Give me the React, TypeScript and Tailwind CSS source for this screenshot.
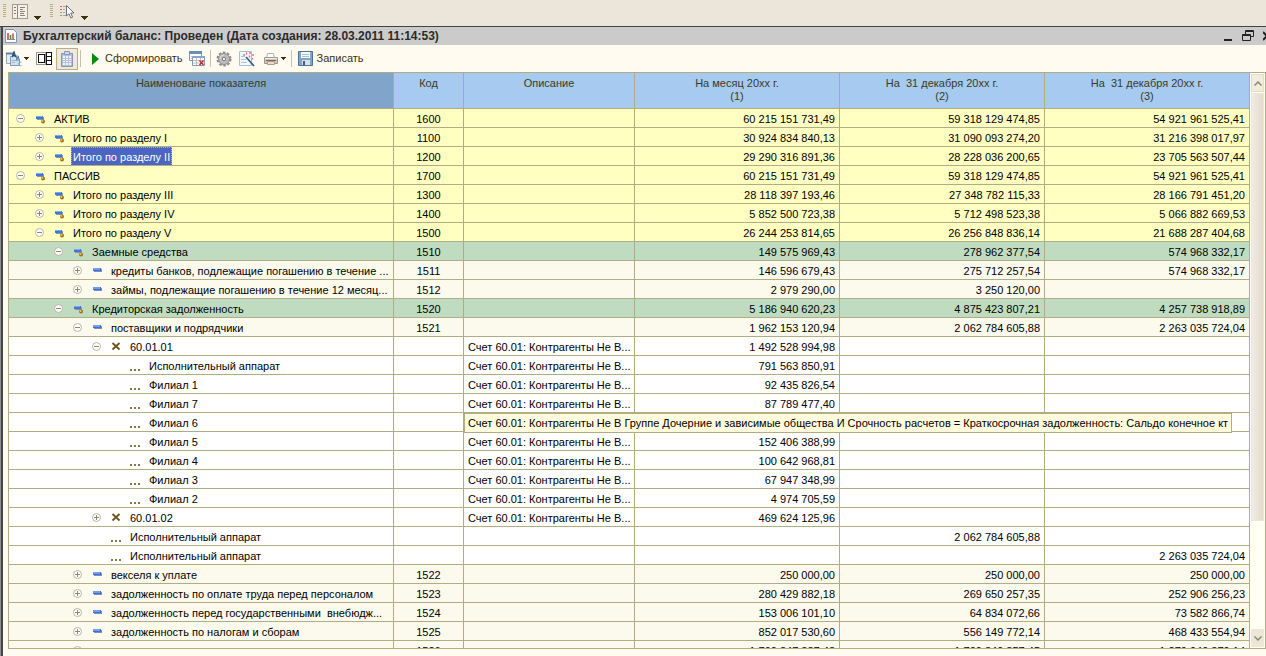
import React, { FC, ReactNode } from 'react'

type Mark = 'group' | 'item' | 'cross' | 'dots'
type Tone = 'yellow' | 'green' | 'cream' | 'white'

interface Row {
    level: number
    toggle?: 'plus' | 'minus'
    mark: Mark
    tone: Tone
    name: string
    code?: string
    note?: string
    values: string[]
    selected?: boolean
    tip?: string
}

const NOTE = 'Счет 60.01: Контрагенты Не В...'
const TIP = 'Счет 60.01: Контрагенты Не В Группе Дочерние и зависимые общества И Срочность расчетов = Краткосрочная задолженность: Сальдо конечное кт'

const rows: Row[] = [
    { level: 0, toggle: 'minus', mark: 'group', tone: 'yellow', name: 'АКТИВ', code: '1600', values: ['60 215 151 731,49', '59 318 129 474,85', '54 921 961 525,41'] },
    { level: 1, toggle: 'plus', mark: 'group', tone: 'yellow', name: 'Итого по разделу I', code: '1100', values: ['30 924 834 840,13', '31 090 093 274,20', '31 216 398 017,97'] },
    { level: 1, toggle: 'plus', mark: 'group', tone: 'yellow', name: 'Итого по разделу II', code: '1200', values: ['29 290 316 891,36', '28 228 036 200,65', '23 705 563 507,44'], selected: true },
    { level: 0, toggle: 'minus', mark: 'group', tone: 'yellow', name: 'ПАССИВ', code: '1700', values: ['60 215 151 731,49', '59 318 129 474,85', '54 921 961 525,41'] },
    { level: 1, toggle: 'plus', mark: 'group', tone: 'yellow', name: 'Итого по разделу III', code: '1300', values: ['28 118 397 193,46', '27 348 782 115,33', '28 166 791 451,20'] },
    { level: 1, toggle: 'plus', mark: 'group', tone: 'yellow', name: 'Итого по разделу IV', code: '1400', values: ['5 852 500 723,38', '5 712 498 523,38', '5 066 882 669,53'] },
    { level: 1, toggle: 'minus', mark: 'group', tone: 'yellow', name: 'Итого по разделу V', code: '1500', values: ['26 244 253 814,65', '26 256 848 836,14', '21 688 287 404,68'] },
    { level: 2, toggle: 'minus', mark: 'group', tone: 'green', name: 'Заемные средства', code: '1510', values: ['149 575 969,43', '278 962 377,54', '574 968 332,17'] },
    { level: 3, toggle: 'plus', mark: 'item', tone: 'cream', name: 'кредиты банков, подлежащие погашению в течение ...', code: '1511', values: ['146 596 679,43', '275 712 257,54', '574 968 332,17'] },
    { level: 3, toggle: 'plus', mark: 'item', tone: 'cream', name: 'займы, подлежащие погашению в течение 12 месяц...', code: '1512', values: ['2 979 290,00', '3 250 120,00', ''] },
    { level: 2, toggle: 'minus', mark: 'group', tone: 'green', name: 'Кредиторская задолженность', code: '1520', values: ['5 186 940 620,23', '4 875 423 807,21', '4 257 738 918,89'] },
    { level: 3, toggle: 'minus', mark: 'item', tone: 'cream', name: 'поставщики и подрядчики', code: '1521', values: ['1 962 153 120,94', '2 062 784 605,88', '2 263 035 724,04'] },
    { level: 4, toggle: 'minus', mark: 'cross', tone: 'white', name: '60.01.01', note: NOTE, values: ['1 492 528 994,98', '', ''] },
    { level: 5, mark: 'dots', tone: 'white', name: 'Исполнительный аппарат', note: NOTE, values: ['791 563 850,91', '', ''] },
    { level: 5, mark: 'dots', tone: 'white', name: 'Филиал 1', note: NOTE, values: ['92 435 826,54', '', ''] },
    { level: 5, mark: 'dots', tone: 'white', name: 'Филиал 7', note: NOTE, values: ['87 789 477,40', '', ''] },
    { level: 5, mark: 'dots', tone: 'white', name: 'Филиал 6', tip: TIP, values: ['', '', ''] },
    { level: 5, mark: 'dots', tone: 'white', name: 'Филиал 5', note: NOTE, values: ['152 406 388,99', '', ''] },
    { level: 5, mark: 'dots', tone: 'white', name: 'Филиал 4', note: NOTE, values: ['100 642 968,81', '', ''] },
    { level: 5, mark: 'dots', tone: 'white', name: 'Филиал 3', note: NOTE, values: ['67 947 348,99', '', ''] },
    { level: 5, mark: 'dots', tone: 'white', name: 'Филиал 2', note: NOTE, values: ['4 974 705,59', '', ''] },
    { level: 4, toggle: 'plus', mark: 'cross', tone: 'white', name: '60.01.02', note: NOTE, values: ['469 624 125,96', '', ''] },
    { level: 4, mark: 'dots', tone: 'white', name: 'Исполнительный аппарат', values: ['', '2 062 784 605,88', ''] },
    { level: 4, mark: 'dots', tone: 'white', name: 'Исполнительный аппарат', values: ['', '', '2 263 035 724,04'] },
    { level: 3, toggle: 'plus', mark: 'item', tone: 'cream', name: 'векселя к уплате', code: '1522', values: ['250 000,00', '250 000,00', '250 000,00'] },
    { level: 3, toggle: 'plus', mark: 'item', tone: 'cream', name: 'задолженность по оплате труда перед персоналом', code: '1523', values: ['280 429 882,18', '269 650 257,35', '252 906 256,23'] },
    { level: 3, toggle: 'plus', mark: 'item', tone: 'cream', name: 'задолженность перед государственными  внебюдж...', code: '1524', values: ['153 006 101,10', '64 834 072,66', '73 582 866,74'] },
    { level: 3, toggle: 'plus', mark: 'item', tone: 'cream', name: 'задолженность по налогам и сборам', code: '1525', values: ['852 017 530,60', '556 149 772,14', '468 433 554,94'] },
    { level: 3, toggle: 'plus', mark: 'item', tone: 'cream', name: '', code: '1526', values: ['1 790 847 887,48', '1 709 849 857,45', '1 279 949 879,14'] },
]

const tones: Record<Tone, string> = {
    yellow: 'bg-[#ffffc2]',
    green: 'bg-[#c0dcc0]',
    cream: 'bg-[#fcfaec]',
    white: 'bg-white',
}

const columns = [
    { title: 'Наименоване показателя', width: '' },
    { title: 'Код', width: 'w-[70px]' },
    { title: 'Описание', width: 'w-[171px]' },
    { title: 'На месяц 20xx г.', sub: '(1)', width: 'w-[205px]' },
    { title: 'На  31 декабря 20xx г.', sub: '(2)', width: 'w-[205px]' },
    { title: 'На  31 декабря 20xx г.', sub: '(3)', width: 'w-[205px]' },
]

const MarkIcon: FC<{ mark: Mark }> = ({ mark }) => (
    <svg className="mr-[7px] h-3 w-3 shrink-0" viewBox="0 0 12 12" shapeRendering="crispEdges">
        {mark === 'group' && <>
            <path d="M1 4h7v3H1z" fill="#3f78d6" />
            <path d="M1 4h6v1H1z" fill="#7eaaf0" />
            <path d="M2 7h6V5h1v3H2z" fill="#8b93a8" />
            <g shapeRendering="auto">
                <circle cx="8" cy="9.500" r="2" fill="#9a7116" />
                <circle cx="7.500" cy="9" r="1" fill="#ecc65c" />
            </g>
        </>}
        {mark === 'item' && <>
            <path d="M1 4h8v3H1z" fill="#3c70cd" />
            <path d="M1 4h7v2H1z" fill="#6f9fee" />
            <path d="M2 7h7V5h1v3H2z" fill="#7f90b4" />
        </>}
        {mark === 'cross' && <path d="M1.500 3l7 6.500M8.500 3l-7 6.500" stroke="#6b531d" strokeWidth="1.800" shapeRendering="auto" />}
        {mark === 'dots' && <path d="M0 10h2v2H0zM4 10h2v2H4zM8 10h2v2H8z" fill="#8a7840" />}
    </svg>
)

const Toggle: FC<{ kind?: 'plus' | 'minus' }> = ({ kind }) => {
    if (!kind) return <span className="mr-2 w-3 shrink-0" />
    return (
        <button type="button" aria-label={kind === 'plus' ? 'Развернуть' : 'Свернуть'} className="mr-2 w-3 shrink-0">
            <svg className="block h-3 w-3" viewBox="0 0 12 12">
                <circle cx="5.500" cy="6.500" r="4" fill="#fffef6" stroke="#b9b6a8" />
                <path d={kind === 'plus' ? 'M3 6.500h5M5.500 4v5' : 'M3 6.500h5'} stroke="#8a877c" />
            </svg>
        </button>
    )
}

const Caret = () => (
    <svg className="h-[3px] w-[5px]" viewBox="0 0 5 3" shapeRendering="crispEdges"><path d="M0 0h5v1H0zM1 1h3v1H1zM2 2h1v1H2z" fill="#3b3010" /></svg>
)

const BigCaret = () => (
    <svg className="h-1 w-[7px]" viewBox="0 0 7 4" shapeRendering="crispEdges"><path d="M0 0h7v1H0zM1 1h5v1H1zM2 2h3v1H2zM3 3h1v1H3z" fill="#3b3010" /></svg>
)

const Grip = () => (
    <svg className="h-[13px] w-[3px]" viewBox="0 0 3 13" shapeRendering="crispEdges">
        <path d="M1.500 0v13" stroke="#bdae7b" strokeWidth="3" strokeDasharray="1 1" />
    </svg>
)

const Separator = () => <span className="h-[17px] w-px bg-[#c9c2a4]" />

const IconButton: FC<{ label: string, className?: string, children: ReactNode }> = ({ label, className, children }) => (
    <button type="button" aria-label={label} title={label} className={`flex items-center ${className ?? ''}`}>{children}</button>
)

const TopBar = () => (
    <div className="flex h-[26px] items-start bg-[#ece5d9] pt-1 pl-[3px]">
        <Grip />
        <IconButton label="Содержание" className="ml-1.5 items-end gap-1.5">
            <svg className="h-4 w-4" viewBox="0 0 16 16">
                <rect x=".5" y=".5" width="15" height="14" fill="#f4f1ea" stroke="#a39c90" />
                <path d="M5.500 1v13" stroke="#8c8579" />
                <path d="M2 3.500h2M2 6.500h2M2 9.500h2" stroke="#a8685c" />
                <path d="M8 3.500h5M8 5.500h3M8 7.500h5M8 9.500h4M8 11.500h5" stroke="#8b8379" />
                <path d="M8 3.500h2M8 7.500h2" stroke="#a8685c" />
            </svg>
            <BigCaret />
        </IconButton>
        <span className="w-[9px]" />
        <Grip />
        <IconButton label="Выбор" className="ml-1.5 items-end gap-1.5">
            <svg className="h-4 w-4" viewBox="0 0 16 16">
                <path d="M1 2.500h2M1 5.500h2" stroke="#c96a5c" />
                <path d="M1 8.500h2M1 11.500h2" stroke="#86a57c" />
                <path d="M4 2.500h3M4 5.500h2M4 8.500h2M4 11.500h3" stroke="#a3a8ae" />
                <path d="M7.500 1.500v10.500l2.500-2.300 1.800 4.300 1.800-.8-1.800-4.200h3.200z" fill="#fff" stroke="#6a707a" />
            </svg>
            <BigCaret />
        </IconButton>
    </div>
)

const TitleBar = () => (
    <div className="flex h-[18px] items-center bg-[#cbcbcb] pl-0.5">
        <svg className="mr-1.5 h-[14px] w-3" viewBox="0 0 12 14">
            <path d="M.5.5h8l3 3v10H.5z" fill="#fbfcfe" stroke="#7d98b5" />
            <path d="M3 4v6" stroke="#c33b2c" strokeWidth="1.500" />
            <path d="M5.500 6v4" stroke="#3c8b3a" strokeWidth="1.500" />
            <path d="M8 4.500V10" stroke="#b9502f" strokeWidth="1.500" />
            <path d="M2 10.500h8" stroke="#7e8a96" />
        </svg>
        <h1 className="flex-1 text-xs font-bold whitespace-nowrap text-[#2b2b2b]">
            Бухгалтерский баланс: Проведен (Дата создания: 28.03.2011 11:14:53)
        </h1>
        <IconButton label="Свернуть окно" className="mr-[9px]">
            <svg className="h-3 w-[9px]" viewBox="0 0 9 12"><path d="M0 10h8" stroke="#222" strokeWidth="2" /></svg>
        </IconButton>
        <IconButton label="Восстановить" className="mr-[9px]">
            <svg className="h-3 w-3" viewBox="0 0 12 12" fill="none" stroke="#222">
                <path d="M3.500 4v-3.500h8v6h-3M3 1.500h9" />
                <path d="M.5 4.500h8v6h-8zM0 5.500h9" />
            </svg>
        </IconButton>
        <IconButton label="Закрыть">
            <svg className="h-2.5 w-[3px]" viewBox="0 0 3 10"><path d="M0 1l4 4-4 4" stroke="#222" strokeWidth="2" fill="none" /></svg>
        </IconButton>
    </div>
)

const Toolbar = () => (
    <div className="flex h-[27px] items-center text-[11px] text-[#3b3010]">
        <IconButton label="Действия" className="ml-[3px] gap-0.5">
            <svg className="h-4 w-4" viewBox="0 0 16 16">
                <path d="M.5 2.500h6v10h-6z" fill="#e6eef6" stroke="#8fa9c3" />
                <path d="M0 2.500h7" stroke="#5b82ab" strokeWidth="2" />
                <path d="M4.500 5.500h6l3 3v6h-9z" fill="#cfe0ef" stroke="#7d9dbc" />
                <path d="M6 9.500h4M6 11.500h3" stroke="#9ab5cd" />
                <path d="M6.200 6L8 .8 9.800 6M7 4.300h2" stroke="#1f4d78" strokeWidth="1.200" fill="none" />
                <path d="M10.600 4.600v4.800M10.600 5h1.600q1.300 1 0 2h-1.600 2q1.300 1.100 0 2.200h-2" stroke="#5d86ad" fill="none" />
                <path d="M15.500 11.300q-2.600-1.200-2.700 1.700 0 2.600 2.700 1.600" stroke="#8aa6c2" fill="none" />
            </svg>
            <Caret />
        </IconButton>
        <IconButton label="Расположение" className="ml-[7px]">
            <svg className="h-[14px] w-4" viewBox="0 0 16 14" fill="#fff" stroke="#111" shapeRendering="crispEdges">
                <path d="M.5.5h9v12h-9z" stroke="#999" />
                <path d="M2.500 2.500h6v8h-6z" />
                <path d="M10.500.5h5v12h-5zM10 4.500h6M10 8.500h6" />
            </svg>
        </IconButton>
        <IconButton label="Буфер" className="ml-1 h-[22px] w-[22px] justify-center border border-[#b9ae86] bg-[#eee9db]">
            <svg className="h-4 w-3" viewBox="0 0 12 16">
                <path d="M.5 2.500h11v13H.5z" fill="#b3c0d8" stroke="#8696b4" />
                <path d="M2 5h8v9H2z" fill="#f1f5fa" />
                <path d="M2 7.500h8M2 9.500h8M2 11.500h8M4.500 5v9M7.500 5v9" stroke="#b3c0d8" />
                <path d="M3.500.5h5v3h-5z" fill="#d3dae6" stroke="#8696b4" />
            </svg>
        </IconButton>
        <span className="mr-[11px] ml-0.5 flex"><Separator /></span>
        <button type="button" className="flex items-center gap-1.5 whitespace-nowrap">
            <svg className="h-3 w-[7px]" viewBox="0 0 7 12"><path d="M0 0l7 6-7 6z" fill="#0b8a12" /></svg>
            Сформировать
        </button>
        <IconButton label="Очистить" className="ml-1.5">
            <svg className="h-4 w-4" viewBox="0 0 16 16">
                <path d="M.5.5h12v9H.5z" fill="#fff" stroke="#8796a6" />
                <path d="M0 1.500h13" stroke="#6d8fb3" strokeWidth="3" />
                <path d="M2 5.500h2M2 7.500h2" stroke="#b7c0ca" />
                <path d="M3.500 5.500h12v9h-12z" fill="#fff" stroke="#8796a6" />
                <path d="M3 6h13" stroke="#88a5c2" strokeWidth="2" />
                <path d="M4 9.500h11M4 12h11M7.500 7v7M11.500 7v7" stroke="#b7c0ca" />
                <path d="M10.500 9.500l4 4.500M14.500 9.500l-4 4.500" stroke="#c5261b" strokeWidth="1.300" />
            </svg>
        </IconButton>
        <span className="mr-[5px] ml-[5px] flex"><Separator /></span>
        <IconButton label="Настройка">
            <svg className="h-4 w-4" viewBox="0 0 16 16">
                <circle cx="8" cy="8" r="6.500" fill="none" stroke="#8b8b8b" strokeWidth="2" strokeDasharray="2.500 1.600" />
                <circle cx="8" cy="8" r="5.500" fill="#bcbcbc" stroke="#8e8e8e" />
                <path d="M4 8a4 4 0 0 1 4-4" stroke="#e4e4e4" fill="none" />
                <circle cx="8" cy="8" r="1.700" fill="#f4f2ea" stroke="#7c7c7c" />
            </svg>
        </IconButton>
        <IconButton label="Мастер" className="ml-[7px]">
            <svg className="h-4 w-4" viewBox="0 0 16 16">
                <path d="M.5.5h12v14H.5z" fill="#f4f8fc" stroke="#a9bfd4" />
                <path d="M2 5.500h4M2 8.500h5M2 11.500h6" stroke="#b5c4d2" />
                <path d="M7 6l8 9" stroke="#3a5f87" strokeWidth="1.800" />
                <path d="M7.500 1.500v2M11 1v2M14 3v2M10.500 4.500v2M5 3v2M13.500 7v1.500" stroke="#de6a5c" strokeWidth="1.300" />
            </svg>
        </IconButton>
        <IconButton label="Печать" className="ml-2 gap-0.5">
            <svg className="h-4 w-4" viewBox="0 0 16 16">
                <path d="M4.500 2.500h6l1 5h-8z" fill="#fff" stroke="#b5b2ac" />
                <path d="M1.500 6.500h13v6h-13z" fill="#cbc8c2" stroke="#9b9892" />
                <path d="M2 7.500h12" stroke="#efeeea" />
                <path d="M3 9.500h10" stroke="#6f6c68" />
                <path d="M4.500 10.500h7v3h-7z" fill="#f3d9c4" stroke="#b99a84" />
            </svg>
            <Caret />
        </IconButton>
        <span className="mr-1.5 ml-[5px] flex"><Separator /></span>
        <button type="button" className="flex items-center gap-1 whitespace-nowrap">
            <svg className="h-[15px] w-[15px]" viewBox="0 0 15 15">
                <path d="M.5.5h14v14H.5z" fill="#7ea6c8" stroke="#4c7396" />
                <path d="M3 1h9v6H3z" fill="#f5f9fc" />
                <path d="M4 3.500h7M4 5.500h7" stroke="#a9bfd2" />
                <path d="M4 9h8v5H4z" fill="#d9e2ea" />
                <path d="M5 10h2v4H5z" fill="#3f5f7e" />
            </svg>
            Записать
        </button>
    </div>
)

const BalanceTable = () => (
    <table className="w-full table-fixed border-separate border-spacing-0 text-[11px] leading-[13px]">
        <thead>
            <tr className="h-9">
                {columns.map((col, key) => (
                    <th key={key} scope="col" className={`border-r border-b border-[#b0ac84] pt-1 align-top font-normal whitespace-pre text-[#3b3a24] ${key === 0 ? 'bg-[#80a4ca]' : 'bg-[#a6caf0]'} ${col.width}`}>
                        {col.title}
                        {col.sub && <><br />{col.sub}</>}
                    </th>
                ))}
            </tr>
        </thead>
        <tbody>
            {rows.map((row, key) => (
                <tr key={key} className={`h-[19px] *:border-r *:border-b *:border-[#b0ac84] *:p-0 ${tones[row.tone]}`}>
                    <td>
                        <div className="flex h-[18px] items-center overflow-hidden pl-1.5 whitespace-pre">
                            <span className="shrink-0" style={{ width: row.level * 19 }} />
                            <Toggle kind={row.toggle} />
                            <MarkIcon mark={row.mark} />
                            <span className={row.selected ? '-ml-0.5 border border-dotted border-[#c8b060] bg-[#4a66c0] px-px pt-[3px] pb-px text-white' : 'pt-0.5'}>{row.name}</span>
                        </div>
                    </td>
                    <td className="text-center"><div className="pt-0.5">{row.code}</div></td>
                    <td className="relative">
                        {row.note && <div className="pt-0.5 pl-1 whitespace-nowrap">{row.note}</div>}
                        {row.tip && <div role="tooltip" className="absolute top-0 left-0 z-10 flex h-5 items-center border border-[#b0ac84] bg-[#fffbdc] px-[3px] whitespace-nowrap">{row.tip}</div>}
                    </td>
                    {row.values.map((value, i) => <td key={i} className="text-right"><div className="pt-0.5 pr-1">{value}</div></td>)}
                </tr>
            ))}
        </tbody>
    </table>
)

const ScrollBar = () => (
    <div className="flex w-[15px] shrink-0 flex-col bg-[#fffff4]">
        <button type="button" aria-label="Вверх" className="m-px flex h-[18px] items-center justify-center border border-[#e6e0b8] bg-[#f1ebe0]">
            <svg className="h-[5px] w-2" viewBox="0 0 8 5"><path d="M.5 4.500L4 1l3.500 3.500" stroke="#8f8a6c" strokeWidth="1.500" fill="none" /></svg>
        </button>
        <div className="mx-px flex flex-1 flex-col">
            <div className="h-[80%] border border-[#efe8cf] bg-linear-to-r from-[#f1ebe3] to-[#e3dacd]" />
        </div>
        <button type="button" aria-label="Вниз" className="m-px flex h-[18px] items-center justify-center border border-[#efe8cf] bg-[#ebe5da]">
            <svg className="h-[5px] w-2" viewBox="0 0 8 5"><path d="M.5.5L4 4 7.500.5" stroke="#8f8a6c" strokeWidth="1.500" fill="none" /></svg>
        </button>
    </div>
)

const App: FC = () => (
    <div className="flex h-screen flex-col overflow-hidden bg-[#ece5d9] font-['Liberation_Sans',Arial,sans-serif] text-black">
        <TopBar />
        <div className="flex min-h-0 flex-1 border-t border-[#45453f] bg-[#8e8e8e] pl-px">
            <main className="flex min-w-0 flex-1 flex-col border-l-2 border-[#45454a] bg-[#fffbf0]">
                <TitleBar />
                <Toolbar />
                <div className="mb-[7px] ml-[5px] flex min-h-0 flex-1 border border-[#b0ac84]">
                    <div className="min-w-0 flex-1 overflow-hidden"><BalanceTable /></div>
                    <ScrollBar />
                </div>
            </main>
        </div>
    </div>
)

export default App
